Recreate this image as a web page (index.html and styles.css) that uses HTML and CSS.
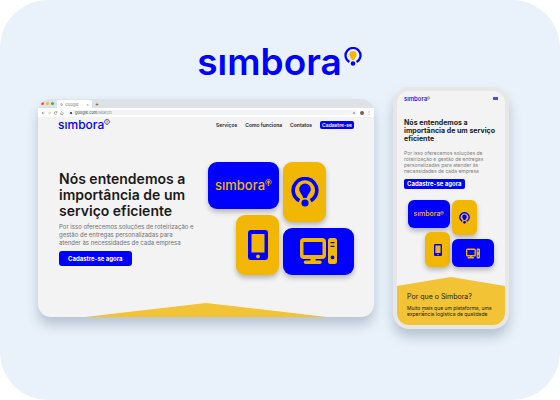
FILE: index.html
```html
<!DOCTYPE html>
<html lang="pt-BR">
<head>
<meta charset="utf-8">
<meta name="viewport" content="width=device-width, initial-scale=1">
<title>Simbora</title>
<link rel="stylesheet" href="styles.css">
</head>
<body>
<svg class="defs" aria-hidden="true">
  <symbol id="pin" viewBox="0 0 28 30">
    <path d="M8.4 23.7A11.8 11.8 0 1 1 19.6 23.7" fill="none" stroke="currentColor" stroke-width="3.600"/>
    <path class="bulb" d="M14 6.4a5.8 5.8 0 0 1 5.8 5.9c0 3-3 4.800-4 8.700h-3.600c-1-3.900-4-5.700-4-8.700A5.800 5.800 0 0 1 14 6.400z"/>
    <circle cx="14" cy="26" r="5.200" fill="var(--gap, transparent)"/>
    <circle cx="14" cy="26" r="3.600" fill="currentColor"/>
  </symbol>
  <symbol id="mobile" viewBox="0 0 20 30">
    <path fill="currentColor" fill-rule="evenodd" d="M3 0h14a3 3 0 0 1 3 3v24a3 3 0 0 1-3 3H3a3 3 0 0 1-3-3V3a3 3 0 0 1 3-3zM3.500 4v18.500h13V4zM10 24.500a1.900 1.900 0 1 0 0 3.800 1.900 1.900 0 0 0 0-3.800z"/>
  </symbol>
  <symbol id="desktop" viewBox="0 0 37 26">
    <path fill="currentColor" fill-rule="evenodd" d="M4 0h18a4 4 0 0 1 4 4v13a4 4 0 0 1-4 4h-6.500v1.500H20a1.700 1.700 0 0 1 0 3.500H5.500a1.700 1.700 0 0 1 0-3.500h5V21H4a4 4 0 0 1-4-4V4a4 4 0 0 1 4-4zM3.500 4v13h19V4zM30.500 0h4A2.500 2.500 0 0 1 37 2.500v21a2.500 2.500 0 0 1-2.500 2.500h-4a2.500 2.500 0 0 1-2.500-2.500v-21A2.500 2.500 0 0 1 30.500 0zM30.500 4v1.300h4V4zM30.500 7.800v1.300h4V7.800zM32.500 17.500a1.900 1.900 0 1 0 0 3.800 1.900 1.900 0 0 0 0-3.800z"/>
  </symbol>
</svg>

<main class="stage">
  <div class="brand brand-xl" role="img" aria-label="simbora"><span>sımbora</span><svg><use href="#pin"/></svg></div>

  <div class="devices">
    <section class="browser">
      <div class="tabbar">
        <i class="light red"></i><i class="light amber"></i><i class="light green"></i>
        <div class="tab">
          <svg class="favicon" viewBox="0 0 8 8"><g fill="none" stroke-width="1.600"><path stroke="#ea4335" d="M1.500 2.500A3 3 0 0 1 6 1.700"/><path stroke="#fbbc05" d="M1.500 2.500a3 3 0 0 0 0 3"/><path stroke="#34a853" d="M1.500 5.500A3 3 0 0 0 6 6.200"/><path stroke="#4285f4" d="M6 6.200A3 3 0 0 0 7 4H4"/></g></svg>
          <span>Google</span><span class="close">×</span>
        </div>
        <span class="plus">+</span>
      </div>
      <div class="toolbar">
        <svg class="controls" viewBox="0 0 26 6" fill="none" stroke="#888" stroke-width=".7"><path d="M4 3H1M2.300 1.700L1 3l1.300 1.300"/><path stroke="#bbb" d="M7.500 3h3M9.200 1.700L10.500 3 9.200 4.300"/><path d="M17 2a1.500 1.500 0 1 0 .2 1.800M17.200 1v1.300h-1.300"/><path d="M21 3.200L22.700 1.500l1.700 1.700M21.500 3v1.700h2.400V3"/></svg>
        <div class="address"><i class="lock"></i><span>google.com<em>/search</em></span><i class="star"></i></div>
        <i class="avatar"></i><span class="more">⋮</span>
      </div>

      <header class="site-head">
        <div class="brand brand-md" role="img" aria-label="simbora"><span>sımbora</span><svg><use href="#pin"/></svg></div>
        <nav>
          <a href="#servicos">Serviços</a>
          <a href="#como">Como funciona</a>
          <a href="#contatos">Contatos</a>
          <a class="cta" href="#cadastro">Cadastre-se</a>
        </nav>
      </header>
      <div class="hero">
        <div class="copy">
          <h1>Nós entendemos a<br>importância de um<br>serviço eficiente</h1>
          <p>Por isso oferecemos soluções de roteirização e<br>gestão de entregas personalizadas para<br>atender às necessidades de cada empresa</p>
          <button type="button">Cadastre-se agora</button>
        </div>
        <div class="cards">
          <div class="col left">
            <div class="card blue wide"><div class="brand brand-card" role="img" aria-label="simbora"><span>sımbora</span><svg><use href="#pin"/></svg></div></div>
            <div class="card gold tall"><svg class="i-mobile"><use href="#mobile"/></svg></div>
          </div>
          <div class="col">
            <div class="card gold tall"><svg class="i-pin"><use href="#pin"/></svg></div>
            <div class="card blue wide"><svg class="i-desktop"><use href="#desktop"/></svg></div>
          </div>
        </div>
      </div>
      <div class="roof"></div>
    </section>

    <section class="phone">
      <header class="phone-head">
        <div class="brand brand-sm" role="img" aria-label="simbora"><span>sımbora</span><svg><use href="#pin"/></svg></div>
        <button type="button" class="menu" aria-label="Menu"></button>
      </header>
      <div class="phone-copy">
        <h2>Nós entendemos a<br>importância de um serviço<br>eficiente</h2>
        <p>Por isso oferecemos soluções de<br>roteirização e gestão de entregas<br>personalizadas para atender às<br>necessidades de cada empresa</p>
        <button type="button">Cadastre-se agora</button>
      </div>
      <div class="cards small">
        <div class="col left">
          <div class="card blue wide"><div class="brand brand-mini" role="img" aria-label="simbora"><span>sımbora</span><svg><use href="#pin"/></svg></div></div>
          <div class="card gold tall"><svg class="i-mobile"><use href="#mobile"/></svg></div>
        </div>
        <div class="col">
          <div class="card gold tall"><svg class="i-pin"><use href="#pin"/></svg></div>
          <div class="card blue wide"><svg class="i-desktop"><use href="#desktop"/></svg></div>
        </div>
      </div>
      <div class="why">
        <h3>Por que o Simbora?</h3>
        <p>Muito mais que um plataforma, uma<br>experiência logística de qualidade</p>
      </div>
    </section>
  </div>
</main>
</body>
</html>
```
FILE: styles.css
```css
:root {
  --blue: #0000fe;
  --gold: #f2b705;
  --roof: #f2c335;
  --page: #f3f3f3;
  --ink: #1a1a1a;
}

* { box-sizing: border-box; }

body {
  margin: 0;
  background: #fff;
  color: var(--ink);
  font-family: Inter, "Liberation Sans", sans-serif;
}

h1, h2, h3, p { margin: 0; }

button { display: block; border: 0; font-family: inherit; cursor: pointer; }

a { color: inherit; text-decoration: none; }

.defs { position: absolute; width: 0; height: 0; }

.stage {
  min-height: 100vh;
  padding: 41px 51px 40px 38px;
  border-radius: 48px;
  background: #e9f2fa;
}

/* Wordmark */
.brand {
  display: flex;
  align-items: flex-start;
  color: var(--blue);
  font-weight: 500;
}

.brand svg { flex: none; }
.bulb { fill: var(--bulb, currentColor); }

.brand-xl {
  --bulb: var(--gold);
  --gap: #e9f2fa;
  width: max-content;
  height: 46px;
  margin: 0 auto;
  padding-left: 12px;
  gap: 2px;
  font-size: 37px;
  font-weight: 600;
  line-height: 42px;
}
.brand-xl svg { width: 18px; height: 19px; margin-top: 6px; }

.brand-md { --bulb: var(--gold); font-size: 12px; line-height: 14px; }
.brand-md svg { width: 6px; height: 6px; margin-top: 1px; }

.brand-card { color: var(--gold); font-size: 13px; line-height: 16px; }
.brand-card svg { width: 7px; height: 7px; margin-top: 2px; }

.brand-sm { --bulb: var(--gold); font-size: 6px; line-height: 8px; }
.brand-sm svg { width: 3px; height: 4px; margin-top: 1px; }

.brand-mini { color: var(--gold); font-size: 7px; line-height: 8px; }
.brand-mini svg { width: 4px; height: 4px; margin-top: 1px; }

.devices { display: flex; align-items: center; gap: 19px; }

/* Browser window */
.browser {
  flex: 1;
  overflow: hidden;
  border-radius: 13px;
  background: var(--page);
  box-shadow: 0 8px 12px rgba(50, 65, 95, .26);
}

.tabbar {
  display: flex;
  align-items: center;
  height: 9px;
  padding-left: 3px;
  gap: 2px;
  background: #dee1e6;
  font-size: 4px;
  line-height: 5px;
}
.light { width: 3px; height: 3px; border-radius: 50%; }
.red { background: #f04c4c; }
.amber { background: #f5b32c; }
.green { background: #2bb94a; }

.tab {
  display: flex;
  align-items: center;
  align-self: flex-end;
  width: 35px;
  height: 8px;
  margin-left: 1px;
  padding: 0 3px;
  gap: 2px;
  border-radius: 2px 2px 0 0;
  background: #fff;
  color: #777;
}
.favicon { width: 3px; height: 3px; }
.close { margin-left: auto; }
.plus { margin-left: 1px; color: #444; font-size: 6px; }

.toolbar {
  display: flex;
  align-items: center;
  height: 9px;
  padding: 0 3px;
  gap: 3px;
  background: #fff;
  font-size: 4px;
  line-height: 5px;
}
.controls { width: 24px; height: 6px; }
.address {
  display: flex;
  flex: 1;
  align-items: center;
  height: 5px;
  padding: 0 2px;
  gap: 3px;
  border-radius: 3px;
  background: #f1f3f4;
  color: #444;
}
.address em { color: #888; font-style: normal; }
.lock { width: 2px; height: 2px; background: #555; }
.star { width: 2px; height: 2px; margin-left: auto; border-radius: 50%; background: #999; }
.avatar { width: 4px; height: 4px; border-radius: 50%; background: #8a5a4a; }
.more { color: #666; }

.site-head {
  display: flex;
  align-items: center;
  justify-content: space-between;
  height: 16px;
  padding: 0 20px;
}
.site-head nav {
  display: flex;
  align-items: center;
  gap: 8px;
  font-size: 5px;
  font-weight: 600;
  line-height: 8px;
}
.cta { padding: 0 2px; border-radius: 2px; background: var(--blue); color: #fff; }

.hero {
  display: flex;
  align-items: center;
  justify-content: space-between;
  height: 170px;
  padding: 0 20px 0 21px;
}
.copy { white-space: nowrap; }
.copy h1 { font-size: 14px; font-weight: 600; line-height: 16px; }
.copy p { margin-top: 4px; color: #707070; font-size: 6px; line-height: 8px; }
.copy button,
.phone-copy button { background: var(--blue); color: #fff; font-weight: 700; }
.copy button {
  margin-top: 4px;
  padding: 0 9px;
  border-radius: 3px;
  font-size: 6px;
  line-height: 15px;
}

/* Illustration tiles */
.cards { display: flex; gap: 4px; }
.col { display: flex; flex-direction: column; align-items: flex-start; gap: 6px; }
.left { align-items: flex-end; }
.card {
  display: flex;
  align-items: center;
  justify-content: center;
  border-radius: 9px;
  box-shadow: 0 3px 5px rgba(0, 0, 0, .25);
}
.blue { background: var(--blue); color: var(--gold); }
.gold { --gap: var(--gold); background: var(--gold); color: var(--blue); }
.wide { width: 71px; height: 47px; }
.tall { width: 43px; height: 60px; }
.i-mobile { width: 20px; height: 30px; }
.i-pin { width: 28px; height: 30px; }
.i-desktop { width: 37px; height: 26px; }

.small { gap: 2px; padding-left: 11px; }
.small .col { gap: 4px; }
.small .card { border-radius: 6px; }
.small .wide { width: 42px; height: 28px; }
.small .tall { width: 25px; height: 35px; }
.small .i-mobile { width: 8px; height: 12px; }
.small .i-pin { width: 11px; height: 12px; }
.small .i-desktop { width: 14px; height: 11px; }

.roof {
  height: 14px;
  background: var(--roof);
  clip-path: polygon(50% 0, 86% 100%, 14% 100%);
}

/* Phone */
.phone {
  flex: none;
  width: 116px;
  overflow: hidden;
  border: 4px solid #e7e7e7;
  border-radius: 16px;
  background: var(--page);
  box-shadow: 0 8px 12px rgba(50, 65, 95, .26);
}
.phone-head {
  display: flex;
  align-items: center;
  justify-content: space-between;
  height: 15px;
  padding: 0 7px;
}
.menu {
  width: 5px;
  height: 3px;
  padding: 0;
  background: #4a4af8;
}
.phone-copy { padding: 13px 0 11px 7px; white-space: nowrap; }
.phone-copy h2 { font-size: 7px; font-weight: 700; line-height: 8px; }
.phone-copy p { margin-top: 7px; color: #808080; font-size: 5px; line-height: 6px; }
.phone-copy button {
  margin-top: 5px;
  padding: 0 3px;
  border-radius: 2px;
  font-size: 6px;
  line-height: 10px;
}
.why {
  height: 48px;
  margin-top: 10px;
  padding: 15px 10px 0;
  background: var(--roof);
  clip-path: polygon(50% 0, 100% 19%, 100% 100%, 0 100%, 0 19%);
  white-space: nowrap;
}
.why h3 { font-size: 7px; font-weight: 400; line-height: 9px; }
.why p { margin-top: 4px; font-size: 5px; line-height: 6px; }
```
